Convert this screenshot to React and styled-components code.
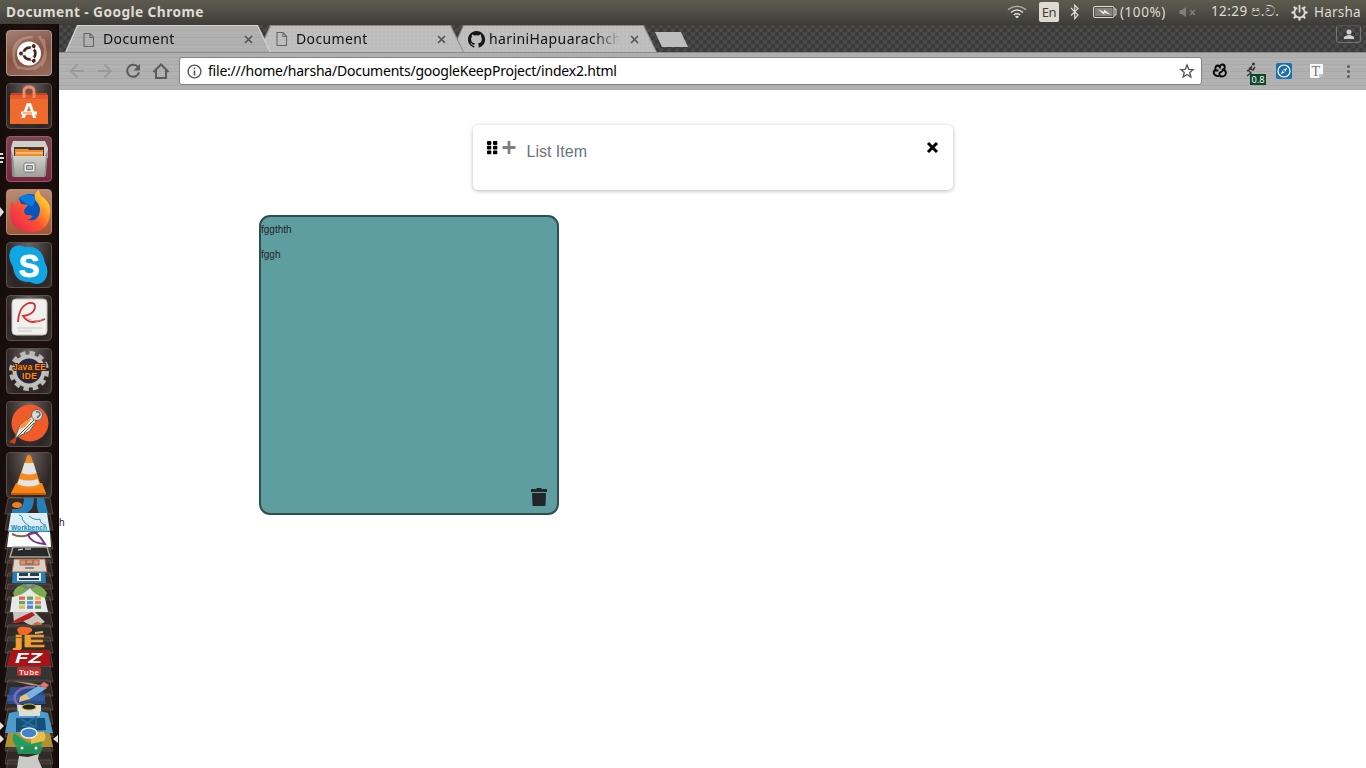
import React from 'react';
import styled, { createGlobalStyle, css } from 'styled-components';

const GlobalStyle = createGlobalStyle`
  * { box-sizing: border-box; }
  body { margin: 0; background: #fff; overflow: hidden; }
  svg { display: block; flex: none; overflow: visible; }
`;

const uiFont = css`font-family: "Noto Sans", "Open Sans", sans-serif;`;

const Desktop = styled.div`
  display: flex; flex-direction: column; width: 1366px; height: 768px; overflow: hidden;
`;
const MenuBar = styled.header`
  ${uiFont}
  height: 24px; flex: none; display: flex; align-items: center; padding: 0 5px 0 6px;
  background: linear-gradient(#5d5a4f 0, #56544b 30%, #3e3d38 100%);
  color: #dfdbd2; font-size: 14px; line-height: 24px; white-space: nowrap;
`;
const WindowTitle = styled.span`
  font-weight: 700; font-size: 13.7px; letter-spacing: ${p => p.$track}px; flex: 1;
`;
const Indicators = styled.div` display: flex; align-items: center; `;
const Status = styled.span`
  margin-left: ${p => p.$gap || 0}px; width: ${p => p.$w}px; letter-spacing: ${p => p.$track || 0}px;
  font-size: 13.5px; white-space: nowrap; flex: none; padding-bottom: ${p => p.$raise || 0}px;
`;
const Slot = styled.span` margin-left: ${p => p.$gap}px; flex: none; `;
const Language = styled.span`
  margin-left: 12px; width: 20px; height: 20px; border-radius: 2px; background: #dfdbd2; color: #3f3e39;
  font-size: 13px; line-height: 20px; text-align: center; letter-spacing: -.4px;
`;
const Workspace = styled.div` display: flex; flex: 1; min-height: 0; `;
const Dock = styled.nav`
  width: 59px; flex: none; display: flex; flex-direction: column; padding-top: 6px;
  background: linear-gradient(90deg, #160d0b, #1e120e 50%, #170e0c 94%, #0b0808);
  overflow: hidden;
`;
const DockTile = styled.div`
  width: 46px; height: 46px; flex: none; margin: 0 0 ${p => p.$after ?? 7}px 6px; border-radius: 4px;
  border: 1px solid ${p => p.$edge || '#57504d'};
  background: ${p => p.$bg || 'radial-gradient(ellipse at 50% 0,#6b6462 0,#453e3c 45%,#2c2523 75%,#3a3331 100%)'};
  svg { margin: -1px; }
`;
const DockFold = styled.div` flex: none; height: 271px; `;
const Browser = styled.section` width: 1307px; display: flex; flex-direction: column; `;
const TabStrip = styled.div`
  ${uiFont}
  height: 28px; flex: none; display: flex; align-items: flex-start; padding: 1px 5px 0 6px;
  background-color: #454545;
  background-image: conic-gradient(#3b3b3b 25%, #494949 0 50%, #3b3b3b 0 75%, #494949 0);
  background-size: 8px 8px; box-shadow: inset 0 1px #3c3c3a;
`;
const metal = css`
  background: repeating-linear-gradient(#b3b3b3 0 1px, #adadad 1px 2px, #b1b1b1 2px 4px, #a9a9a9 4px 5px, #b2b2b2 5px 7px);
`;
const TabEdge = styled.div`
  width: 206px; height: 27px; flex: none; margin-right: -13px; position: relative; z-index: ${p => p.$level};
  clip-path: polygon(0 100%, 12px 0, 193px 0, 100% 100%);
  background: ${p => (p.$active ? '#d0d0d0' : '#8b8b8b')};
`;
const TabBody = styled.div`
  height: ${p => (p.$active ? 27 : 26)}px; margin-top: 1px; display: flex; align-items: center; padding: 0 18px 0 17px;
  clip-path: polygon(1px 100%, 13px 0, 192px 0, 205px 100%);
  ${p => (p.$active ? metal : css`background: radial-gradient(#b9b9b9 35%, #bfbfbf 40%) 0 0 / 4px 4px;`)}
  color: #111; font-size: 14px;
`;
const TabTitle = styled.span`
  margin-left: ${p => p.$gap}px; width: 130px; flex: none; overflow: hidden; white-space: nowrap;
  letter-spacing: ${p => p.$track}px; line-height: 24px; height: 25px;
  mask-image: linear-gradient(90deg, #000 106px, transparent 132px);
`;
const NewTab = styled.span`
  width: 33px; height: 15px; margin: 7px 0 0 11px; background: #bdbdbd;
  clip-path: polygon(0 0, 26px 0, 100% 100%, 7px 100%);
`;
const Profile = styled.span`
  margin-left: auto; width: 25px; height: 18px; border: 1px solid #757575; border-top-color: #555; border-radius: 3px;
  display: flex; align-items: center; justify-content: center;
`;
const Toolbar = styled.div`
  height: 38px; flex: none; display: flex; align-items: center; padding: 0 0 1px 10px; border-top: 1px solid #8a8a8a;
  ${metal}
`;
const Address = styled.div`
  ${uiFont}
  margin-left: 9px; width: 1023px; height: 28px; flex: none; display: flex; align-items: center;
  border: 1px solid #818181; border-radius: 3px; background: #fff; padding: 0 7px 0 7px; color: #000; font-size: 14px;
`;
const Url = styled.span` margin-left: 6px; flex: 1; letter-spacing: -.22px; line-height: 26px; white-space: nowrap; `;
const Page = styled.main`
  flex: 1; background: #fff; padding-top: 35px; font-family: "Liberation Sans", Arial, sans-serif;
`;
const ListBox = styled.div`
  width: 480px; height: 65px; margin: 0 auto; border-radius: 5px; background: #fff; display: flex; padding: 15px 14px;
  box-shadow: 0 1px 4px rgba(0,0,0,.28);
`;
const Placeholder = styled.span` color: #6c757d; font-size: 16px; line-height: 24px; margin-left: 10px; flex: 1; `;
const Note = styled.article`
  width: 300px; height: 300px; margin: 25px 0 0 200px; border: 2px solid #2f4f4f; border-radius: 11px;
  background: #5f9ea0; color: #212529; font-size: 10px; line-height: 15px; display: flex; flex-direction: column;
  padding-top: 5px;
`;
const NoteLine = styled.p` margin: 0 0 10px; `;
const Trash = styled.div` margin: auto 9px 7px auto; `;
const StrayText = styled.div` font-size: 10px; line-height: 15px; color: #212529; `;

const PageIcon = () => (
  <svg width="14" height="16" viewBox="0 0 14 16" fill="none" stroke="#666" strokeWidth="1.1">
    <path d="M2 1.5h6l3.5 3.7v9.3H2zM8 1.5v4h3.5" />
  </svg>
);
const GithubIcon = () => (
  <svg width="17" height="17" viewBox="0 0 16 16" fill="#161616">
    <path d="M8 0C3.58 0 0 3.58 0 8c0 3.54 2.29 6.53 5.47 7.59.4.07.55-.17.55-.38v-1.33c-2.23.48-2.7-1.07-2.7-1.07-.36-.93-.89-1.17-.89-1.17-.73-.5.05-.49.05-.49.81.06 1.23.83 1.23.83.72 1.23 1.88.87 2.34.67.07-.52.28-.87.51-1.07-1.78-.2-3.65-.89-3.65-3.95 0-.87.31-1.59.82-2.15-.08-.2-.36-1.02.08-2.12 0 0 .67-.21 2.2.82a7.6 7.6 0 0 1 4 0c1.53-1.04 2.2-.82 2.2-.82.44 1.1.16 1.92.08 2.12.51.56.82 1.27.82 2.15 0 3.07-1.87 3.75-3.66 3.95.29.25.54.73.54 1.48v2.19c0 .21.15.46.55.38A8 8 0 0 0 8 0z" />
  </svg>
);
const CloseMark = styled.svg` margin-left: auto; `;
const CloseIcon = () => (
  <CloseMark width="9" height="9" viewBox="0 0 9 9" stroke="#555" strokeWidth="1.7">
    <path d="M1 1l7 7M8 1L1 8" />
  </CloseMark>
);

const tabs = [
  { title: 'Document', track: 0.38, gap: 7, icon: PageIcon, active: true },
  { title: 'Document', track: 0.38, gap: 7, icon: PageIcon },
  { title: 'hariniHapuarachchi', track: 0.4, gap: 4, icon: GithubIcon },
];

function Tab({ tab, level }) {
  const Icon = tab.icon;
  return (
    <TabEdge $active={tab.active} $level={level}>
      <TabBody $active={tab.active}>
        <Icon />
        <TabTitle $gap={tab.gap} $track={tab.track}>{tab.title}</TabTitle>
        <CloseIcon />
      </TabBody>
    </TabEdge>
  );
}

const WifiIcon = () => (
  <svg width="20" height="14" viewBox="0 0 20 14" fill="none" stroke="#dfdbd2" strokeWidth="1.5">
    <path d="M1 4.7Q10-2.2 19 4.7" opacity=".65" /><path d="M4 7.5Q10 2.7 16 7.5M6.7 10Q10 7.5 13.3 10" />
    <path d="M8 11.5q2-1.3 4 0l-2 2z" fill="#dfdbd2" stroke="none" />
  </svg>
);
const BluetoothIcon = () => (
  <svg width="8" height="16" viewBox="0 0 8 16" fill="none" stroke="#dfdbd2" strokeWidth="1.2">
    <path d="M0 4l7 7-3.3 3.7V1.2L7 4.5l-7 7" />
  </svg>
);
const BatteryIcon = () => (
  <svg width="24" height="12" viewBox="0 0 24 12" fill="none" stroke="#dfdbd2">
    <rect x=".5" y=".5" width="20.5" height="11" rx="1.5" />
    <path d="M2 2h17.5v8H2z" fill="#817f77" stroke="none" />
    <path d="M21.5 3h1.5v6h-1.5" />
    <path d="M4.5 3l6.5 3V3.5L18 9l-7-2.5.5 2.5z" fill="#f7f4ec" stroke="none" />
  </svg>
);
const MuteIcon = () => (
  <svg width="18" height="12" viewBox="0 0 18 12" fill="#817f75" stroke="#817f75">
    <path d="M.5 4h2L7 1v10L2.5 8h-2z" stroke="none" /><path d="M11 4l5 5m0-5l-5 5" strokeWidth="1.5" />
  </svg>
);
const GearIcon = () => (
  <svg width="17" height="17" viewBox="-8.5 -8.5 17 17" fill="none" stroke="#dfdbd2">
    <path d="M-2.3-4.8A5.2 5.2 0 1 0 2.3-4.8M0-7.5V0" strokeWidth="1.8" />
    {[45, 90, 135, 180, 225, 270, 315].map(a => <path key={a} d="M0-5V-8" transform={`rotate(${a})`} strokeWidth="2.2" />)}
  </svg>
);
const NavIcons = () => (
  <svg width="101" height="20" viewBox="69 61 101 20" fill="none" stroke="#999" strokeWidth="1.8">
    <path d="M84 71H71M77.5 64.5L71 71l6.5 6.5M98 71h13M104.5 64.5L111 71l-6.5 6.5" />
    <g stroke="#5b5b5b" strokeWidth="2"><path d="M138 67.2a6 6 0 1 0 1 5" /><path d="M140 64v6.5h-6.5z" fill="#5b5b5b" stroke="none" />
      <path d="M153.5 72L161 64.5l7.5 7.5M156 70v8h10v-8" /></g>
  </svg>
);
const InfoIcon = () => (
  <svg width="15" height="15" viewBox="0 0 15 15" fill="none" stroke="#555" strokeWidth="1.4">
    <circle cx="7.5" cy="7.5" r="6.4" /><path d="M7.5 6.5v5M7.5 3.5v1.7" strokeWidth="1.6" />
  </svg>
);
const StarIcon = () => (
  <svg width="14" height="14" viewBox="0 0 14 14" fill="none" stroke="#555" strokeWidth="1.3">
    <path d="M7 1l1.7 4.3 4.5.3-3.5 2.9 1.2 4.5L7 10.5 3.1 13l1.2-4.5L.8 5.6l4.5-.3z" />
  </svg>
);
const Extensions = () => (
  <svg width="164" height="36" viewBox="1202 53 164 36" fill="none">
    <path d="M1218.5 70.5h-4q-1.5 1.500 0 4 2 2 4.500 1.500M1215.500 70q-.5-4 2-4.500 2.500 0 2.500 3M1220 66.500q.5-2.500 3-2 2.500 1 1.500 4l-2.500 1.500q3.500-.5 4 2.500-.5 4-4 4-3 0-2.500-3.500l3-2" stroke="#080808" strokeWidth="1.900" />
    <g stroke="#333" strokeWidth="1.4"><path d="M1252 66l-3 4-2 1M1249 68l4 2 2-3M1249 71l2 2-4 3" /><circle cx="1253.5" cy="64" r=".8" fill="#333" /></g>
    <path d="M1250 74h16v11h-16z" fill="#0b4728" />
    <text x="1251.5" y="83.2" fill="#fff" fontFamily="Noto Sans, sans-serif" fontSize="9.5" textLength="13" lengthAdjust="spacingAndGlyphs">0.8</text>
    <rect x="1276" y="63" width="16" height="16" rx="2" fill="#1970ad" />
    <circle cx="1284" cy="71" r="6" stroke="#fff" strokeWidth="1.2" /><path d="M1287.5 67.5l-2.5 4.5-4.5 2.5 2.5-4.5z" fill="#fff" /><circle cx="1284" cy="71" r="1" fill="#1970ad" />
    <path d="M1310 64h13v10l-4 4h-9z" fill="#f8f8f8" /><path d="M1323 74h-4v4z" fill="#c7c7c7" />
    <text x="1311.5" y="75.5" fill="#777" fontFamily="Liberation Serif, serif" fontSize="14" fontWeight="400">T</text>
    <g fill="#5b5b5b"><circle cx="1348.5" cy="66.5" r="1.5" /><circle cx="1348.5" cy="71.5" r="1.5" /><circle cx="1348.5" cy="76.5" r="1.5" /></g>
  </svg>
);

const art = { width: 46, height: 46, viewBox: '0 0 46 46' };
const UbuntuArt = () => (
  <svg {...art} fill="none">
    <path d="M8 29Q4 8 27 7M13 39Q1 25 16 9M37 9q7 20-9 31M33 6q12 18 2 30M10 36q15 8 27-5" stroke="#e5c6b9" strokeWidth="2.5" opacity=".35" />
    <circle cx="23" cy="23.500" r="12" fill="#fff" /><circle cx="23.5" cy="23.5" r="5.9" stroke="#4a261b" strokeWidth="2.7" />
    {[60, 180, 300].map(a => <g key={a} transform={`rotate(${a} 23.5 23.5)`}><path d="M28 23.5h5" stroke="#fff" strokeWidth="3.5" /><circle cx="32" cy="23.5" r="2" fill="#4a261b" /></g>)}
  </svg>
);
const SoftwareArt = () => (
  <svg {...art}>
    <path d="M5 10h36l1 5H4z" fill="#c1451d" /><path d="M4 12h38v29H4z" fill="#ef6b2d" /><path d="M4 12h38v4H4z" fill="#e2582c" />
    <path d="M18 15V8q0-4 5-4t5 4v7" fill="none" stroke="#f38a6b" strokeWidth="3" />
    <text x="23" y="35" textAnchor="middle" fontFamily="Liberation Sans, sans-serif" fontSize="22" fontWeight="700" fill="#fff">A</text>
    <path d="M15 30h16" stroke="#fff" strokeWidth="3" /><path d="M17 30h9" stroke="#ef6b2d" />
  </svg>
);
const FilesArt = () => (
  <svg {...art}>
    <defs><linearGradient id="cab" x2="0" y2="1"><stop stopColor="#d0d0cd" /><stop offset="1" stopColor="#9e9e9a" /></linearGradient></defs>
    <path d="M7 5h32l3 7v10H5V12z" fill="#cfcfcc" /><path d="M8 11h30v11H8z" fill="#4c3429" /><path d="M9 13h13l1 1h14v7H9z" fill="#ed8b2f" /><path d="M10 17h27" stroke="#ffe3ac" />
    <path d="M5 14l3 8h30l4-8-2 25q0 2-3 2H9q-3 0-3-2z" fill="#8e8e8b" /><path d="M7 20h33l-2 21H9z" fill="url(#cab)" />
    <rect x="18" y="27" width="11" height="9" rx="1.5" fill="#eee" stroke="#777" /><path d="M20.5 29.5h6v4h-6z" fill="#bbb" stroke="#777" />
  </svg>
);
const FirefoxArt = () => (
  <svg {...art}>
    <defs><linearGradient id="fox" x1="0" y1="1" x2="1" y2="0"><stop stopColor="#e51c5b" /><stop offset=".45" stopColor="#ff5131" /><stop offset=".75" stopColor="#ffb52c" /><stop offset="1" stopColor="#ffe94d" /></linearGradient></defs>
    <circle cx="24" cy="19" r="14" fill="#0754be" /><path d="M12 9q9-7 19 0l-5 9z" fill="#087de0" />
    <path d="M5 13l4 3 4-6 2 5 7 1-4 5q0 6 5 5l4 1q-5 6-10 2 12 6 16-3 3-8-3-14 -4-7 3-11 0 5 5 8 8 7 6 17-2 16-18 17Q5 42 4 25z" fill="url(#fox)" />
  </svg>
);
const SkypeArt = () => (
  <svg {...art}>
    <path d="M6 6q6-5 13-1 17-2 20 16 5 8 0 17-6 7-15 2Q9 41 7 25 0 13 6 6z" fill="#10a5e3" />
    <text x="23" y="34.500" textAnchor="middle" fontFamily="Liberation Sans, sans-serif" fontSize="31" fontWeight="700" fill="#fff" stroke="#fff" strokeWidth=".8">S</text>
  </svg>
);
const ReaderArt = () => (
  <svg {...art}>
    <rect x="6" y="4" width="35" height="36" rx="4" fill="#f0f0ef" stroke="#c3bfbd" />
    <path d="M12 27q1-16 11-19 7-1 6 5-2 7-12 8 4 6 10 6 6 0 12-3" fill="none" stroke="#cf3132" strokeWidth="1.8" /><path d="M18 22q8 6 21 2l-8 3z" fill="#e58078" />
    <path d="M11 33h25M12 36h14" stroke="#d5d5d5" strokeWidth="1.7" />
  </svg>
);
const EclipseArt = () => (
  <svg {...art}>
    <circle cx="23" cy="23" r="18" fill="none" stroke="#b9b9b8" strokeWidth="4" strokeDasharray="5.4 4.025" />
    <circle cx="23" cy="23" r="14.5" fill="#29253c" stroke="#c0c0bd" strokeWidth="4" />
    <g fill="#f58a25" stroke="#3f2310" strokeWidth="1.8" paintOrder="stroke" fontFamily="Liberation Sans, sans-serif" fontSize="8.5" fontWeight="700"><text x="7" y="22" textLength="33">Java EE</text><text x="16" y="31" textLength="15">IDE</text></g>
  </svg>
);
const PostmanArt = () => (
  <svg {...art}>
    <circle cx="24" cy="22" r="18.500" fill="#f15a29" /><path d="M3 41l8-6-2 8z" fill="#d43e22" />
    <path d="M9 37l5-13 12-9 4 5-6 10z" fill="#e8e5d9" stroke="#6a6258" /><path d="M13 28q4-9 13-11l-7 9z" fill="#f99536" />
    <path d="M11 36l17-17M18 32l10-10" stroke="#645f56" /><circle cx="31" cy="14" r="5.5" fill="#d8d9d4" stroke="#6a6258" /><path d="M30 11q4-1 4 3l-3 3" fill="none" stroke="#666" strokeWidth="1.5" />
  </svg>
);
const VlcArt = () => (
  <svg {...art}>
    <path d="M10 31l-5 10h35l-4-10z" fill="#f58212" /><path d="M5 41h35v2H5z" fill="#c55908" /><path d="M21 4q2-2 4 0l10 30q-13 6-25 0z" fill="#f58b22" />
    <path d="M18.5 11h9l3 10q-7 3-15 0zM13.5 27q9 3 18 0l2 5q-11 5-22 0z" fill="#e3e5e4" />
  </svg>
);
const dockItems = [
  { art: UbuntuArt, bg: 'linear-gradient(160deg,#a18074,#885343 50%,#976c5c)', edge: '#b1988f' },
  { art: SoftwareArt },
  { art: FilesArt, bg: 'linear-gradient(#7a4553,#78263e)', edge: '#985b6d' },
  { art: FirefoxArt, bg: 'linear-gradient(#b98b72,#9f5737)', edge: '#b98c78' },
  { art: SkypeArt }, { art: ReaderArt }, { art: EclipseArt }, { art: PostmanArt, after: 5 }, { art: VlcArt, after: 0 },
];

const folds = [498, 514, 533, 547, 560, 573, 584, 597, 611, 625, 637, 651, 666, 680, 694, 708, 721, 735, 748, 760];
const FoldedIcons = () => (
  <svg width="59" height="271" viewBox="0 498 59 271">
    {folds.map(y => <path key={y} d={`M8 ${y}h42l3 16H5z`} fill="#47403c" fillOpacity=".55" stroke="#6d6662" strokeOpacity=".55" />)}
    <path d="M24 498h10q0 15-12 16H12v-5q12 2 12-11M37 498h7l4 15h-9q-3-4-2-15" fill="#277fba" /><ellipse cx="17" cy="505" rx="5" ry="3" fill="#f37b20" />
    <path d="M11 513h36l3 19H8z" fill="#dceef6" /><path d="M8 530.5h42v1.5H8z" fill="#278db9" />
    <path d="M19 515q5 2 3 4 3 5 7 7M29 516q6 5 11 3 0 5 6 6" fill="none" stroke="#3788ae" /><text x="11" y="530" fontFamily="Liberation Sans, sans-serif" fontSize="6.5" fontWeight="700" fill="#1686b9" textLength="36">Workbench</text>
    <path d="M9 532h41l1 15H7z" fill="#fff" /><path d="M12 534q8 4 16 1t10-2" fill="none" stroke="#916342" strokeWidth="2" /><path d="M28 535q2-3 8-2 5 4 9 11-14-1-17-9z" fill="none" stroke="#6c3887" strokeWidth="2" />
    <path d="M13 547h34l3 10H10z" fill="#292929" stroke="#a5a5a2" strokeWidth="1.5" /><path d="M18 550l5-1M25 549h6" stroke="#fff" />
    <path d="M14 559h31l2 13H12z" fill="#dbd1c7" stroke="#a35b3b" /><path d="M20 560h19v5H20z" fill="#d99473" stroke="#a9684c" /><path d="M26 560v4h7v-4M25 568h9" fill="none" stroke="#866e63" strokeWidth="1.5" />
    <path d="M13 572h32l1 11H12z" fill="#2680b5" /><path d="M17 573h24v8H17z" fill="#e5ecee" /><path d="M19 573h9v3h-9zm11 0h9v3h-9zm-11 5h20v2H19z" fill="#303b42" />
    <path d="M13 593q3-9 16-9t18 9l-2 5H15z" fill="#7caa50" /><path d="M22 585q7 6 13 0" stroke="#7a7f7c" strokeWidth="3" fill="none" />
    <path d="M12 597q12-2 18-9 3 6 15 10l3 14H10z" fill="#e7e9e6" />
    {['#ef6253', '#5fa758', '#eeb348', '#60ac64', '#5d8fda', '#e17d58', '#e5b64d', '#5182ce', '#57a35b'].map((c, i) => <rect key={i} x={19 + i % 3 * 8} y={596.5 + Math.floor(i / 3) * 4.5} width="6" height="3.3" fill={c} />)}
    <path d="M13 612h22l10 10q-12 7-22-1l-9 2z" fill="#c8c5c0" /><path d="M12 622q6-4 20-10l3 3q-11 8-23 8z" fill="#b51e20" /><path d="M32 625q6-6 10 0z" fill="#d76827" />
    <path d="M17 630q1-4 9-3 7 0 6 4-6 6-13 3z" fill="#f26829" /><path d="M35 633l8-1" stroke="#c9b792" strokeWidth="2" />
    <text x="14" y="647" fontFamily="Liberation Sans, sans-serif" fontSize="17" fontWeight="700" fill="#efa130" stroke="#efa130" strokeWidth=".7" textLength="31" lengthAdjust="spacingAndGlyphs">jE</text>
    <path d="M11 650h38l2 16H7z" fill="#a61418" />
    <text x="15" y="662.5" fontFamily="Liberation Sans, sans-serif" fontSize="15" fontWeight="700" fontStyle="italic" fill="#fff" textLength="27" lengthAdjust="spacingAndGlyphs">FZ</text>
    <path d="M8 667h42l2 12H6z" fill="#343434" /><rect x="17" y="667" width="24" height="9" rx="2" fill="#b83232" /><text x="19" y="674.5" fontFamily="Liberation Sans, sans-serif" fontSize="8" fontWeight="700" fill="#f2ded6" textLength="20">Tube</text>
    <path d="M13 681l18 2 17 4-18-2z" fill="#b19469" />
    <path d="M10 687h32l4 17H7z" fill="#294c89" /><path d="M8 695h37v6H7z" fill="#3559a1" /><path d="M35 687q-16-1-20 8-2 8 6 11" fill="none" stroke="#8068b1" strokeWidth="2.5" /><path d="M20 697l18-11 9 2-17 11z" fill="#78b3e4" /><path d="M20 697l-1 5 11-3-4-5z" fill="#efbf71" /><path d="M40 685l4-3 5 3-4 4z" fill="#e77272" />
    <path d="M17 705h24v11H18z" fill="#dfded5" /><ellipse cx="29" cy="707" rx="7" ry="3" fill="#23231f" stroke="#cbbd32" />
    <path d="M9 713l10-2v5h21v-5l8 2 5 20H5z" fill="#4e9acb" /><path d="M16 718h29l1 12-30 2z" fill="#164f78" /><path d="M21 719l15 8M23 726l13-9v10z" fill="none" stroke="#256f9f" strokeWidth="1.6" />
    <path d="M8 733h42l3 14H5z" fill="#b09235" /><path d="M14 733l14 10 15-3-3 8H18q-8-7-4-15z" fill="#229d5f" /><path d="M31 732h13q3 5 0 9l-13 3z" fill="#e8bd48" /><ellipse cx="29" cy="733" rx="8" ry="5" fill="#4083ca" stroke="#eee" strokeWidth="1.5" />
    <path d="M16 747q13-3 27 0l-3 7H18z" fill="#218f54" /><circle cx="22" cy="748" r="1.5" fill="#fff" /><circle cx="36" cy="748" r="1.5" fill="#fff" />
    <path d="M19 756l9 1 11-3-1 5 4 9H17z" fill="#c9cbc7" />
    <path d="M0 722l4 4-4 4zM0 735l4 4-4 4zM58 735l-5 4 5 4z" fill="#e0dfdc" />
  </svg>
);
const Running = styled.svg` position: absolute; left: 0; top: 150px; `;

export default function App() {
  return (
    <Desktop>
      <GlobalStyle />
      <MenuBar>
        <WindowTitle $track={0.43}>Document - Google Chrome</WindowTitle>
        <Indicators>
          <Slot $gap={0}><WifiIcon /></Slot>
          <Language>En</Language>
          <Slot $gap={12}><BluetoothIcon /></Slot>
          <Slot $gap={14}><BatteryIcon /></Slot>
          <Status $gap={3} $w={47} $track={0.55}>(100%)</Status>
          <Slot $gap={12}><MuteIcon /></Slot>
          <Status $gap={14} $w={68} $track={0.4} $raise={2}>12:29 ප.ව.</Status>
          <Slot $gap={12}><GearIcon /></Slot>
          <Status $gap={6} $w={47} $track={0.2}>Harsha</Status>
        </Indicators>
      </MenuBar>
      <Workspace>
        <Dock>
          {dockItems.map(({ art: Art, bg, edge, after }, i) => <DockTile key={i} $bg={bg} $edge={edge} $after={after}><Art /></DockTile>)}
          <DockFold><FoldedIcons /></DockFold>
          <Running width="5" height="70" fill="#e0dfdc"><path d="M0 3h3v2H0zM0 7h4v2H0zM0 11h3v2H0zM0 57l4 5-4 5z" /></Running>
        </Dock>
        <Browser>
          <TabStrip>
            {tabs.map((tab, i) => <Tab key={i} tab={tab} level={3 - i} />)}
            <NewTab />
            <Profile><svg width="10" height="10" fill="#cfcfcf"><circle cx="5" cy="3" r="2.5" /><path d="M0 10V8q5-4 10 0v2z" /></svg></Profile>
          </TabStrip>
          <Toolbar>
            <NavIcons />
            <Address><InfoIcon /><Url>file:///home/harsha/Documents/googleKeepProject/index2.html</Url><StarIcon /></Address>
            <Extensions />
          </Toolbar>
          <Page>
            <ListBox>
              <svg width="30" height="16" viewBox="487 140 30 16">
                {[0, 1, 2].map(r => [0, 1].map(c => <rect key={`${r}${c}`} x={487 + c * 6} y={141 + r * 4.7} width="4.3" height="3.9" rx=".8" />))}
                <path d="M509 141v13M502.5 147.5h13" stroke="#808080" strokeWidth="2.8" />
              </svg>
              <Placeholder>List Item</Placeholder>
              <svg width="13" height="14" viewBox="0 0 13 14" stroke="#000" strokeWidth="3"><path d="M2 3l9 9M11 3l-9 9" /></svg>
            </ListBox>
            <Note>
              <NoteLine>fggthth</NoteLine><NoteLine>fggh</NoteLine>
              <Trash><svg width="18" height="18" fill="#212529"><path d="M1 1h5l1-1h4l1 1h5v3H1zM2 5h14l-.5 12q0 1-1 1h-11q-1 0-1-1z" /></svg></Trash>
            </Note>
            <StrayText>h</StrayText>
          </Page>
        </Browser>
      </Workspace>
    </Desktop>
  );
}
